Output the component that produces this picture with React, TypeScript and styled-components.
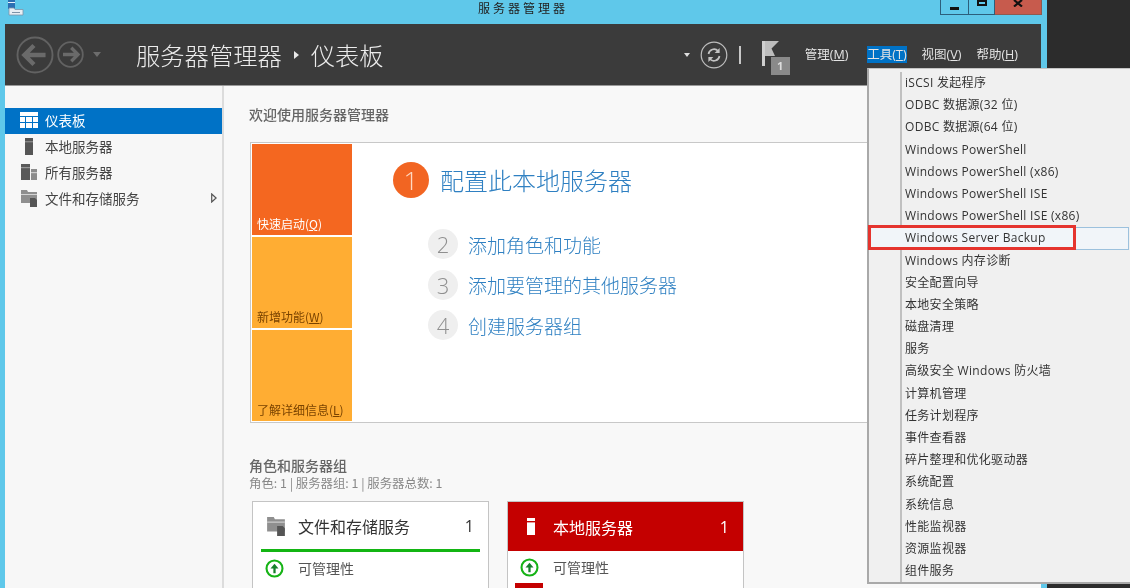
import styled, { createGlobalStyle } from "styled-components";

const GlobalStyle = createGlobalStyle`
  html, body {
    margin: 0;
    padding: 0;
    background: #2c2c2c;
  }
  body {
    font-family: "Open Sans", "Noto Sans CJK SC", sans-serif;
  }
`;

const menuItems = [
  "iSCSI 发起程序",
  "ODBC 数据源(32 位)",
  "ODBC 数据源(64 位)",
  "Windows PowerShell",
  "Windows PowerShell (x86)",
  "Windows PowerShell ISE",
  "Windows PowerShell ISE (x86)",
  "Windows Server Backup",
  "Windows 内存诊断",
  "安全配置向导",
  "本地安全策略",
  "磁盘清理",
  "服务",
  "高级安全 Windows 防火墙",
  "计算机管理",
  "任务计划程序",
  "事件查看器",
  "碎片整理和优化驱动器",
  "系统配置",
  "系统信息",
  "性能监视器",
  "资源监视器",
  "组件服务",
];

function BackIcon({ size }: { size: number }) {
  return (
    <svg width={size} height={size} viewBox="0 0 36 36" fill="none">
      <circle cx="18" cy="18" r="16.6" stroke="#626262" strokeWidth="1.8" />
      <path d="M8 18h20M17 9l-9 9 9 9" stroke="#6a6a6a" strokeWidth="4.2" />
    </svg>
  );
}

function ForwardIcon({ size }: { size: number }) {
  return (
    <svg width={size} height={size} viewBox="0 0 36 36" fill="none">
      <circle cx="18" cy="18" r="16.4" stroke="#626262" strokeWidth="2.4" />
      <path d="M28 18H8M19 9l9 9-9 9" stroke="#6a6a6a" strokeWidth="4.4" />
    </svg>
  );
}

function RefreshIcon() {
  return (
    <svg width="28" height="28" viewBox="0 0 28 28" fill="none">
      <circle cx="14" cy="14" r="12.8" stroke="#bdbdbd" strokeWidth="1.2" />
      <path d="M8.5 13a5.6 5.6 0 0 1 9.6-3" stroke="#c4c4c4" strokeWidth="1.7" />
      <path d="M19.6 7v5h-5z" fill="#c4c4c4" />
      <path d="M19.5 15a5.6 5.6 0 0 1-9.6 3" stroke="#c4c4c4" strokeWidth="1.7" />
      <path d="M8.4 21v-5h5z" fill="#c4c4c4" />
    </svg>
  );
}

function FlagIcon() {
  return (
    <svg width="18" height="25" viewBox="0 0 18 25">
      <path d="M0 0h3v25H0z" fill="#cfcfcf" />
      <path d="M3 0h14L9.5 7.5 13 15H3z" fill="#bdbdbd" />
    </svg>
  );
}

function CloseGlyph() {
  return (
    <svg width="10" height="7" viewBox="0 0 10 7" fill="none">
      <path d="M1 0l8 6.5M9 0L1 6.5" stroke="#111" strokeWidth="2.2" />
    </svg>
  );
}

function DashboardIcon() {
  return (
    <svg width="18" height="16" viewBox="0 0 18 16" fill="#fff">
      <path d="M0 0h18v4H0z" />
      <path d="M0 5h5v5H0zM6 5h6v5H6zM13 5h5v5h-5zM0 11h5v5H0zM6 11h6v5H6zM13 11h5v5h-5z" />
    </svg>
  );
}

function ServerIcon({ color = "#555", light = "#888" }: { color?: string; light?: string }) {
  return (
    <svg width="18" height="17" viewBox="0 0 18 17">
      <path d="M5 0h8v17H5z" fill={color} />
      <path d="M5 3h8v1.4H5z" fill={light} />
    </svg>
  );
}

function AllServersIcon() {
  return (
    <svg width="18" height="16" viewBox="0 0 18 16">
      <path d="M1 0h9v16H1z" fill="#5a5a5a" />
      <path d="M1 3h9v1.2H1z" fill="#999" />
      <path d="M11 5h6v11h-6z" fill="#8c8c8c" />
      <path d="M11 8h6v1.2h-6z" fill="#ccc" />
    </svg>
  );
}

function FilesIcon({ size = 18 }: { size?: number }) {
  return (
    <svg width={size} height={size} viewBox="0 0 18 18">
      <path d="M1 1h6l1 2h9v11H1z" fill="#8f8f8f" />
      <path d="M1 5h16v1H1z" fill="#d4d4d4" />
      <path d="M10 9h5l2 2v7h-7z" fill="#555" />
    </svg>
  );
}

function SideArrowIcon() {
  return (
    <svg width="6" height="10" viewBox="0 0 6 10" fill="none">
      <path d="M.7 1l4.4 4-4.4 4z" stroke="#555" strokeWidth="1.2" />
    </svg>
  );
}

function UpCircleIcon() {
  return (
    <svg width="19" height="19" viewBox="0 0 20 20" fill="none">
      <circle cx="10" cy="10" r="8.4" stroke="#16b316" strokeWidth="2.2" />
      <path d="M10 15V9" stroke="#15802a" strokeWidth="2.4" />
      <path d="M10 5l4.2 5H5.8z" fill="#15802a" />
    </svg>
  );
}

function AppIcon() {
  return (
    <svg width="16" height="16" viewBox="0 0 16 16">
      <path d="M0 0h7v9H0z" fill="#2b6fb3" />
      <path d="M0 2h7v1H0z" fill="#e8f2fb" />
      <path d="M1 8h5l1 1.5h8V15H1z" fill="#e7eef4" stroke="#7d93a8" strokeWidth="0.8" />
      <path d="M4 12h8v1H4z" fill="#7d93a8" />
    </svg>
  );
}

export default function App() {
  return (
    <>
      <GlobalStyle />
      <Desktop>
        <Window>
          <TitleBar>
            <TitleIcon>
              <AppIcon />
            </TitleIcon>
            <TitleText>服务器管理器</TitleText>
            <Controls>
              <ControlButton width={29}>
                <MinimizeGlyph />
              </ControlButton>
              <ControlButton width={26}>
                <RestoreGlyph />
              </ControlButton>
              <CloseButton>
                <CloseGlyph />
              </CloseButton>
            </Controls>
          </TitleBar>

          <Header>
            <NavIcons>
              <BackIcon size={38} />
              <ForwardIcon size={27} />
              <NavCaret />
            </NavIcons>
            <Breadcrumb>
              服务器管理器
              <BreadcrumbCaret />
              仪表板
            </Breadcrumb>
            <HeaderTools>
              <SmallCaret />
              <RefreshIcon />
              <HeaderSeparator />
              <FlagBox>
                <FlagIcon />
                <FlagBadge>1</FlagBadge>
              </FlagBox>
              <MenuBar>
                <MenuLabel>
                  管理(<u>M</u>)
                </MenuLabel>
                <MenuLabel active>
                  工具(<u>T</u>)
                </MenuLabel>
                <MenuLabel>
                  视图(<u>V</u>)
                </MenuLabel>
                <MenuLabel>
                  帮助(<u>H</u>)
                </MenuLabel>
              </MenuBar>
            </HeaderTools>
          </Header>

          <Body>
            <Sidebar>
              <SideItem active>
                <DashboardIcon />
                仪表板
              </SideItem>
              <SideItem>
                <ServerIcon />
                本地服务器
              </SideItem>
              <SideItem>
                <AllServersIcon />
                所有服务器
              </SideItem>
              <SideItem>
                <FilesIcon />
                文件和存储服务
                <SideArrow>
                  <SideArrowIcon />
                </SideArrow>
              </SideItem>
            </Sidebar>

            <Main>
              <WelcomeTitle>欢迎使用服务器管理器</WelcomeTitle>
              <WelcomeCard>
                <Tiles>
                  <Tile bg="#f46720" fg="#fff">
                    <span>
                      快速启动(<u>Q</u>)
                    </span>
                  </Tile>
                  <Tile bg="#ffad33" fg="#7a4300">
                    <span>
                      新增功能(<u>W</u>)
                    </span>
                  </Tile>
                  <Tile bg="#ffad33" fg="#7a4300">
                    <span>
                      了解详细信息(<u>L</u>)
                    </span>
                  </Tile>
                </Tiles>
                <Steps>
                  <PrimaryStep>
                    <PrimaryBullet>1</PrimaryBullet>
                    配置此本地服务器
                  </PrimaryStep>
                  <StepList>
                    <Step>
                      <StepBullet>2</StepBullet>
                      添加角色和功能
                    </Step>
                    <Step>
                      <StepBullet>3</StepBullet>
                      添加要管理的其他服务器
                    </Step>
                    <Step>
                      <StepBullet>4</StepBullet>
                      创建服务器组
                    </Step>
                  </StepList>
                </Steps>
              </WelcomeCard>

              <GroupsTitle>角色和服务器组</GroupsTitle>
              <GroupsSummary>角色: 1 | 服务器组: 1 | 服务器总数: 1</GroupsSummary>

              <GroupRow>
                <GroupCard>
                  <GroupHeader>
                    <GroupIcon>
                      <FilesIcon size={22} />
                    </GroupIcon>
                    <GroupName>文件和存储服务</GroupName>
                    <GroupCount>1</GroupCount>
                  </GroupHeader>
                  <GreenRule />
                  <StatusRow>
                    <UpCircleIcon />
                    可管理性
                  </StatusRow>
                </GroupCard>
                <GroupCard>
                  <AlertHeader>
                    <GroupIcon>
                      <ServerIcon color="#fff" light="#c40000" />
                    </GroupIcon>
                    <GroupName>本地服务器</GroupName>
                    <GroupCount>1</GroupCount>
                  </AlertHeader>
                  <StatusRow>
                    <UpCircleIcon />
                    可管理性
                  </StatusRow>
                  <AlertBlock />
                </GroupCard>
              </GroupRow>
            </Main>
          </Body>
        </Window>

        <ToolsMenu>
          <MenuList>
            {menuItems.map((item) =>
              item === "Windows Server Backup" ? (
                <HighlightedRow key={item}>
                  {item}
                  <RedMark />
                </HighlightedRow>
              ) : (
                <MenuRow key={item}>{item}</MenuRow>
              )
            )}
          </MenuList>
        </ToolsMenu>
      </Desktop>
    </>
  );
}

const Desktop = styled.div`
  position: relative;
  width: 1130px;
  height: 588px;
  overflow: hidden;
  background: #2c2c2c;
  filter: blur(0.45px);
`;

const Window = styled.div`
  display: flex;
  flex-direction: column;
  width: 1047px;
  height: 588px;
  box-sizing: border-box;
  padding: 0 6px 0 5px;
  background: #5fc8ea;
`;

const TitleBar = styled.div`
  display: grid;
  grid-template-columns: 1fr auto 1fr;
  flex: 0 0 24px;
`;

const TitleIcon = styled.div`
  padding-left: 3px;
  line-height: 0;
`;

const TitleText = styled.div`
  font-size: 12px;
  line-height: 17px;
  letter-spacing: 3px;
  color: #222;
`;

const Controls = styled.div`
  display: flex;
  justify-content: flex-end;
  height: 15px;
  margin-right: -1px;
`;

const ControlButton = styled.div<{ width: number }>`
  display: flex;
  align-items: center;
  justify-content: center;
  box-sizing: border-box;
  width: ${(props) => props.width}px;
  border: 1px solid #2c5f7c;
  border-top: none;
  border-left-width: ${(props) => (props.width === 29 ? 1 : 0)}px;
`;

const MinimizeGlyph = styled.div`
  width: 9px;
  height: 3px;
  margin-top: 3px;
  background: #111;
`;

const RestoreGlyph = styled.div`
  width: 10px;
  height: 6px;
  margin-top: -8px;
  box-sizing: border-box;
  border: 2px solid #111;
`;

const CloseButton = styled.div`
  display: flex;
  justify-content: center;
  width: 47px;
  height: 15px;
  box-sizing: border-box;
  line-height: 0;
  background: #c75b4d;
  border: 1px solid #8f5a50;
  border-top: none;
  border-left: none;
`;

const Header = styled.div`
  display: flex;
  align-items: center;
  flex: 0 0 62px;
  box-sizing: border-box;
  padding-right: 23px;
  background: #3b3b3b;
  border-bottom: 1px solid #9a9a9a;
`;

const NavIcons = styled.div`
  display: flex;
  align-items: center;
  gap: 3px;
  width: 131px;
  padding-left: 11px;
  box-sizing: border-box;
`;

const NavCaret = styled.div`
  width: 0;
  height: 0;
  margin: 0 0 0 6px;
  border: 4px solid transparent;
  border-top: 5px solid #6d6d6d;
  border-bottom: none;
`;

const Breadcrumb = styled.div`
  display: flex;
  align-items: center;
  font-family: "Noto Sans CJK SC", sans-serif;
  font-size: 24.3px;
  font-weight: 300;
  color: #ececec;
  line-height: 32px;
`;

const BreadcrumbCaret = styled.span`
  width: 0;
  height: 0;
  margin: 0 12px 0 12px;
  border: 4px solid transparent;
  border-left: 5px solid #e8e8e8;
  border-right: none;
`;

const HeaderTools = styled.div`
  display: flex;
  align-items: center;
  margin-left: auto;
`;

const SmallCaret = styled.div`
  width: 0;
  height: 0;
  margin-right: 10px;
  border: 3px solid transparent;
  border-top: 4px solid #e0e0e0;
  border-bottom: none;
`;

const HeaderSeparator = styled.div`
  width: 2px;
  height: 18px;
  margin: 0 21px 0 11px;
  background: #c8c8c8;
`;

const FlagBox = styled.div`
  position: relative;
  width: 28px;
  height: 34px;
  margin-top: 6px;
`;

const FlagBadge = styled.div`
  position: absolute;
  left: 9px;
  top: 16px;
  width: 19px;
  height: 18px;
  text-align: center;
  font: bold 11px/18px "Open Sans", sans-serif;
  color: #ddd;
  background: #8a8a8a;
`;

const MenuBar = styled.div`
  display: flex;
  align-items: center;
  gap: 15px;
  margin-left: 15px;
`;

const MenuLabel = styled.div<{ active?: boolean }>`
  box-sizing: border-box;
  height: 17px;
  margin-left: ${(props) => (props.active ? 4 : 0)}px;
  font-size: 12.5px;
  line-height: 17px;
  white-space: nowrap;
  color: #e4e4e4;
  background: ${(props) => (props.active ? "#0072c6" : "transparent")};
`;

const Body = styled.div`
  display: flex;
  flex: 1;
  min-height: 0;
  overflow: hidden;
  background: #f8f8f8;
`;

const Sidebar = styled.div`
  flex: 0 0 219px;
  box-sizing: border-box;
  padding-top: 22px;
  background: #f7f7f7;
  border-right: 2px solid #dcdcdc;
`;

const SideItem = styled.div<{ active?: boolean }>`
  display: flex;
  align-items: center;
  gap: 7px;
  height: 26px;
  box-sizing: border-box;
  padding: 0 0 2px 15px;
  font-size: 13.5px;
  font-family: "Noto Sans CJK SC", sans-serif;
  color: ${(props) => (props.active ? "#fff" : "#444")};
  background: ${(props) => (props.active ? "#0072c6" : "transparent")};
`;

const SideArrow = styled.span`
  display: flex;
  margin-left: auto;
  margin-right: 5px;
`;

const Main = styled.div`
  flex: 1;
  min-width: 0;
  padding: 18px 5px 0 25px;
`;

const WelcomeTitle = styled.div`
  font-family: "Noto Sans CJK SC", sans-serif;
  font-size: 14px;
  font-weight: 500;
  line-height: 20px;
  color: #666;
`;

const WelcomeCard = styled.div`
  display: flex;
  height: 281px;
  box-sizing: border-box;
  margin: 18px 0 0 1px;
  padding: 1px;
  background: #fff;
  border: 1px solid #c8c8c8;
`;

const Tiles = styled.div`
  display: flex;
  flex-direction: column;
  gap: 2px;
  flex: 0 0 100px;
`;

const Tile = styled.div<{ bg: string; fg: string }>`
  display: flex;
  align-items: flex-end;
  flex: 1;
  box-sizing: border-box;
  padding: 0 0 3px 5px;
  font-family: "Noto Sans CJK SC", sans-serif;
  font-size: 12px;
  line-height: 17px;
  color: ${(props) => props.fg};
  background: ${(props) => props.bg};
`;

const Steps = styled.div`
  padding: 18px 0 0 41px;
  font-family: "Noto Sans CJK SC", sans-serif;
  font-weight: 300;
  color: #2f80c2;
`;

const PrimaryStep = styled.div`
  display: flex;
  align-items: center;
  gap: 11px;
  font-size: 24px;
  line-height: 36px;
`;

const PrimaryBullet = styled.div`
  width: 36px;
  height: 36px;
  border-radius: 50%;
  text-align: center;
  font: 300 26px/36px "Open Sans", sans-serif;
  color: #ffd9c2;
  background: #f26522;
`;

const StepList = styled.div`
  display: flex;
  flex-direction: column;
  gap: 10.5px;
  margin: 31px 0 0 35px;
`;

const Step = styled.div`
  display: flex;
  align-items: center;
  gap: 10px;
  height: 30px;
  font-size: 19px;
`;

const StepBullet = styled.div`
  width: 30px;
  height: 30px;
  border-radius: 50%;
  text-align: center;
  font: 300 22px/30px "Open Sans", sans-serif;
  color: #8f8f8f;
  background: #efefef;
`;

const GroupsTitle = styled.div`
  margin-top: 33px;
  font-family: "Noto Sans CJK SC", sans-serif;
  font-size: 14px;
  font-weight: 500;
  line-height: 19px;
  color: #666;
`;

const GroupsSummary = styled.div`
  font-family: "Noto Sans CJK SC", sans-serif;
  font-size: 12.4px;
  line-height: 16px;
  color: #888;
`;

const GroupRow = styled.div`
  display: flex;
  gap: 18px;
  margin: 10px 0 0 3px;
`;

const GroupCard = styled.div`
  width: 237px;
  height: 100px;
  box-sizing: border-box;
  background: #fff;
  border: 1px solid #c4c4c4;
  font-family: "Noto Sans CJK SC", sans-serif;
`;

const GroupHeader = styled.div`
  display: flex;
  align-items: center;
  height: 47px;
  padding: 0 14px 0 13px;
  color: #333;
`;

const AlertHeader = styled(GroupHeader)`
  height: 49px;
  color: #fff;
  background: #c40000;
`;

const GroupIcon = styled.div`
  display: flex;
  justify-content: center;
  width: 20px;
  margin-right: 12px;
  line-height: 0;
`;

const GroupName = styled.div`
  font-size: 16px;
  font-weight: 400;
`;

const GroupCount = styled.div`
  margin-left: auto;
  font: 16px "Open Sans", sans-serif;
`;

const GreenRule = styled.div`
  height: 3px;
  margin: 0 8px;
  background: #13b513;
`;

const StatusRow = styled.div`
  display: flex;
  align-items: center;
  gap: 14px;
  height: 32px;
  padding-left: 12px;
  font-size: 14px;
  color: #555;
`;

const AlertBlock = styled.div`
  width: 28px;
  height: 12px;
  margin: 0 0 0 7px;
  background: #c40000;
`;

const ToolsMenu = styled.div`
  position: absolute;
  left: 867px;
  top: 68px;
  width: 270px;
  height: 516px;
  box-sizing: border-box;
  padding-top: 3px;
  background: #f0f0f0;
  border: 2px solid #a9a9a9;
  border-top: 1px solid #c4c4c4;
`;

const MenuList = styled.div`
  display: grid;
  grid-auto-rows: 22.2px;
  margin-left: 31px;
  border-left: 2px solid #c0c0c0;
  font-family: "Open Sans", "Noto Sans CJK SC", sans-serif;
  font-size: 12px;
  letter-spacing: 0.3px;
  color: #333;
`;

const MenuRow = styled.div`
  padding-left: 3px;
  line-height: 22px;
  white-space: nowrap;
`;

const HighlightedRow = styled(MenuRow)`
  position: relative;
  margin-left: -33px;
  width: 260px;
  padding-left: 35px;
  box-sizing: border-box;
  line-height: 20px;
  background: #f1f5f9;
  border: 1px solid #9cc1dd;
`;

const RedMark = styled.div`
  position: absolute;
  left: -2px;
  top: -3px;
  width: 208px;
  height: 25px;
  box-sizing: border-box;
  border: 3px solid #e5342e;
`;
